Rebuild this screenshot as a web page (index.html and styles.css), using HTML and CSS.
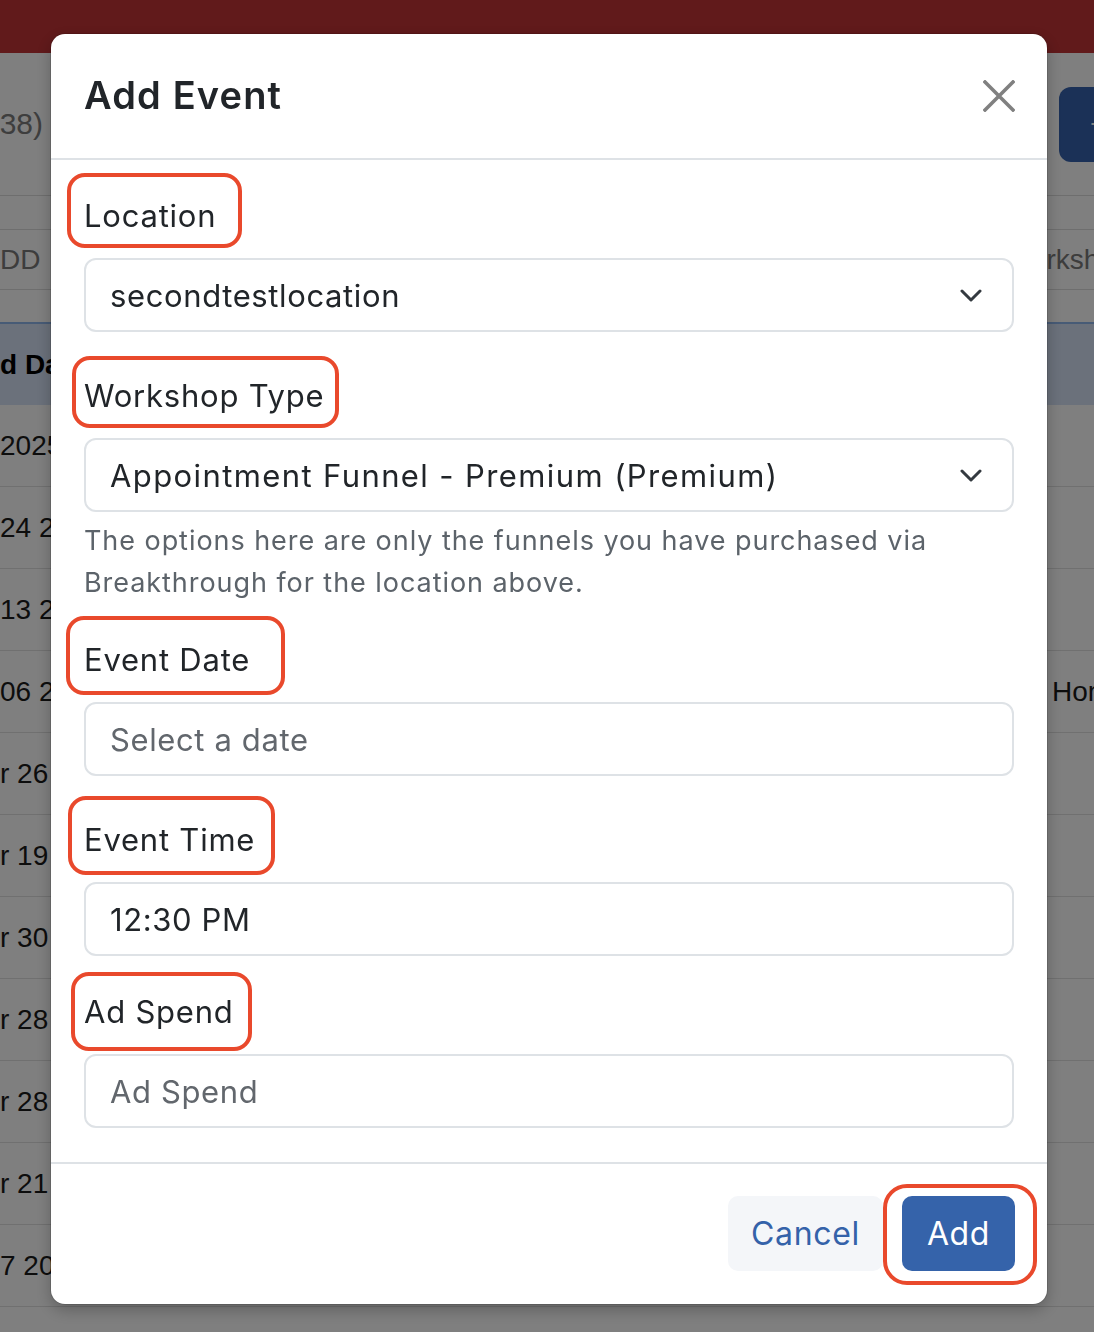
FILE: index.html
```html
<!DOCTYPE html>
<html lang="en">
<head>
<meta charset="utf-8">
<title>Add Event</title>
<link rel="stylesheet" href="styles.css">
</head>
<body>
<div class="page">
  <header class="topbar"></header>
  <div class="title-row">
    <div class="page-title"><span>Workshop Events (38)</span></div>
    <button class="new-btn" type="button">+ Add Event</button>
  </div>
  <div class="band"></div>
  <div class="filter-row">
    <span class="filter-date">DD</span>
    <span class="filter-type">Workshop Type</span>
  </div>
  <div class="gap"></div>
  <div class="table">
    <div class="t-head"><span>d Date</span><span></span></div>
    <div class="t-row"><span>2025</span><span></span></div>
    <div class="t-row"><span>24 2025</span><span></span></div>
    <div class="t-row"><span>13 2025</span><span></span></div>
    <div class="t-row"><span>06 2025</span><span>Home</span></div>
    <div class="t-row"><span>r 26 2025</span><span></span></div>
    <div class="t-row"><span>r 19 2025</span><span></span></div>
    <div class="t-row"><span>r 30 2025</span><span></span></div>
    <div class="t-row"><span>r 28 2025</span><span></span></div>
    <div class="t-row"><span>r 28 2025</span><span></span></div>
    <div class="t-row"><span>r 21 2025</span><span></span></div>
    <div class="t-row"><span>7 2025</span><span></span></div>
  </div>
</div>

<div class="backdrop"></div>

<div class="modal" role="dialog" aria-labelledby="modal-title">
  <div class="modal-header">
    <h2 class="modal-title" id="modal-title">Add Event</h2>
    <button class="close-btn" type="button" aria-label="Close">
      <svg width="32" height="32" viewBox="0 0 32 32"><path d="M2 2 L30 30 M30 2 L2 30" stroke="#808080" stroke-width="3.6" stroke-linecap="square" fill="none"/></svg>
    </button>
  </div>
  <div class="modal-body">
    <div class="field">
      <label class="field-label">Location<span class="mark mark-location"></span></label>
      <div class="control select"><span>secondtestlocation</span>
        <svg class="chev" width="22" height="13" viewBox="0 0 22 13"><path d="M2 2 L11 11 L20 2" stroke="#343a40" stroke-width="3" stroke-linecap="round" stroke-linejoin="round" fill="none"/></svg>
      </div>
    </div>
    <div class="field tight">
      <label class="field-label">Workshop Type<span class="mark mark-workshop"></span></label>
      <div class="control select"><span class="wide">Appointment Funnel - Premium (Premium)</span>
        <svg class="chev" width="22" height="13" viewBox="0 0 22 13"><path d="M2 2 L11 11 L20 2" stroke="#343a40" stroke-width="3" stroke-linecap="round" stroke-linejoin="round" fill="none"/></svg>
      </div>
      <p class="help">The options here are only the funnels you have purchased via Breakthrough for the location above.</p>
    </div>
    <div class="field">
      <label class="field-label">Event Date<span class="mark mark-date"></span></label>
      <input class="control" type="text" placeholder="Select a date">
    </div>
    <div class="field tight">
      <label class="field-label">Event Time<span class="mark mark-time"></span></label>
      <input class="control" type="text" value="12:30 PM">
    </div>
    <div class="field last">
      <label class="field-label">Ad Spend<span class="mark mark-spend"></span></label>
      <input class="control" type="text" placeholder="Ad Spend">
    </div>
  </div>
  <div class="modal-footer">
    <button class="btn btn-cancel" type="button">Cancel</button>
    <button class="btn btn-add" type="button">Add<span class="mark mark-add"></span></button>
  </div>
</div>
</body>
</html>
```

FILE: styles.css
```css
* { box-sizing: border-box; }
html, body { margin: 0; padding: 0; }
body {
  width: 1094px;
  height: 1332px;
  overflow: hidden;
  background: #ffffff;
  font-family: "Liberation Sans", Arial, sans-serif;
}

/* ---------- background page ---------- */
.page { width: 1094px; overflow: hidden; }
.topbar { height: 53px; background: #c23436; }
.title-row {
  height: 143px;
  display: grid;
  grid-template-columns: 1059px 260px;
  align-items: center;
  border-bottom: 1px solid #dcdcdc;
}
.page-title {
  width: 43px;
  display: flex;
  justify-content: flex-end;
  white-space: nowrap;
  font-size: 30px;
  color: #7c7c7c;
}
.new-btn {
  height: 75px;
  border: 0;
  border-radius: 12px;
  background: #3662ae;
  color: #ffffff;
  font-family: "Liberation Sans", Arial, sans-serif;
  font-size: 30px;
  text-align: left;
  padding: 0 0 0 31px;
  white-space: nowrap;
}
.band { height: 34px; border-bottom: 1px solid #dcdcdc; }
.filter-row {
  height: 60px;
  display: grid;
  grid-template-columns: 1005px auto;
  align-items: center;
  border-bottom: 1px solid #dcdcdc;
  font-size: 28px;
  color: #7a7a7a;
  white-space: nowrap;
}
.gap { height: 32px; }
.t-head, .t-row {
  display: grid;
  grid-template-columns: 1052px auto;
  align-items: center;
  white-space: nowrap;
  font-size: 28px;
}
.t-head {
  height: 83px;
  border-top: 2px solid #8fb6ec;
  background: #d6e2f6;
  font-weight: bold;
  color: #000000;
}
.t-row {
  height: 82px;
  border-bottom: 1px solid #e0e0e0;
  color: #1a1a1a;
}

/* ---------- overlay ---------- */
.backdrop {
  position: fixed;
  inset: 0;
  background: rgba(0, 0, 0, 0.5);
}

.modal {
  position: fixed;
  top: 34px;
  left: 51px;
  width: 996px;
  background: #ffffff;
  border-radius: 14px;
  box-shadow: 0 0 0 1px rgba(0, 0, 0, 0.12), 0 6px 16px rgba(0, 0, 0, 0.25);
  font-family: Inter, "Open Sans", sans-serif;
  color: #212529;
}
.modal-header {
  height: 126px;
  border-bottom: 2px solid #dee2e6;
  display: flex;
  align-items: center;
  justify-content: space-between;
  padding: 0 32px 0 33px;
}
.modal-title {
  margin: 0;
  font-size: 38px;
  font-weight: 600;
  line-height: 1.2;
  letter-spacing: 0.03em;
  color: #212529;
}
.close-btn {
  width: 32px;
  height: 32px;
  padding: 0;
  border: 0;
  background: none;
  display: flex;
}

.modal-body { padding: 36px 33px 34px; }
.field { margin-bottom: 44px; }
.field.tight { margin-bottom: 36px; }
.field.last { margin-bottom: 0; }

.field-label {
  position: relative;
  display: block;
  width: fit-content;
  font-size: 31px;
  line-height: 40px;
  letter-spacing: 0.025em;
  margin-bottom: 22px;
  color: #212529;
}
.control {
  display: flex;
  align-items: center;
  justify-content: space-between;
  width: 100%;
  height: 74px;
  border: 2px solid #dee2e6;
  border-radius: 12px;
  padding: 0 30px 0 24px;
  font-family: Inter, "Open Sans", sans-serif;
  font-size: 31px;
  letter-spacing: 0.02em;
  color: #212529;
  background: #ffffff;
  outline: none;
}
.control .wide { letter-spacing: 0.045em; }
.control::placeholder { color: #62676d; opacity: 1; }
.chev { flex-shrink: 0; }
.help {
  margin: 8px 0 0;
  font-size: 27px;
  line-height: 42px;
  letter-spacing: 0.035em;
  color: #5c636a;
}

.modal-footer {
  border-top: 2px solid #dee2e6;
  padding: 32px 32px 33px;
  display: flex;
  justify-content: flex-end;
  gap: 19px;
}
.btn {
  position: relative;
  height: 75px;
  border: 0;
  border-radius: 10px;
  font-family: Inter, "Open Sans", sans-serif;
  font-size: 32px;
  letter-spacing: 0.02em;
  padding: 0;
}
.btn-cancel { width: 155px; background: #f4f6f9; color: #3462a9; }
.btn-add { width: 113px; background: #3563aa; color: #ffffff; }

/* ---------- red annotation outlines ---------- */
.mark {
  position: absolute;
  border: 4px solid #e9492c;
  border-radius: 18px;
  pointer-events: none;
}
.mark-location { top: -23px; bottom: -12px; left: -17px; right: -26px; }
.mark-workshop { top: -20px; bottom: -12px; left: -12px; right: -15px; }
.mark-date { top: -24px; bottom: -15px; left: -18px; right: -35px; }
.mark-time { top: -24px; bottom: -15px; left: -16px; right: -20px; }
.mark-spend { top: -20px; bottom: -19px; left: -13px; right: -18px; }
.mark-add { top: -12px; bottom: -14px; left: -19px; right: -22px; border-radius: 24px; }
```
